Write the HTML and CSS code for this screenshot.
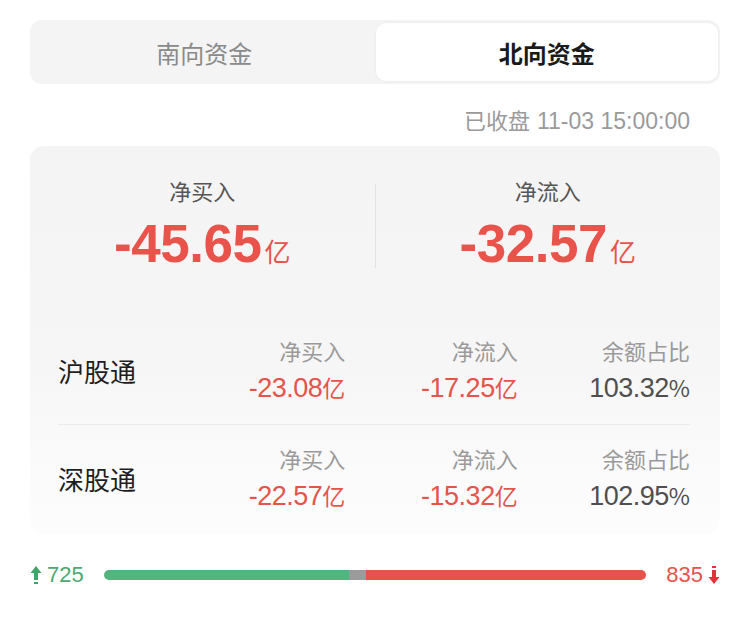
FILE: index.html
```html
<!DOCTYPE html>
<html lang="zh">
<head>
<meta charset="utf-8">
<link rel="stylesheet" href="styles.css">
</head>
<body>
<div class="page">
  <div class="tabs">
    <div class="tab">南向资金</div>
    <div class="tab active">北向资金</div>
  </div>
  <div class="time">已收盘 <span class="tnum">11-03 15:00:00</span></div>
  <div class="card">
    <div class="summary">
      <div class="sum-item">
        <div class="sum-label">净买入</div>
        <div class="sum-value"><span class="num">-45.65</span><span class="unit">亿</span></div>
      </div>
      <div class="sum-divider"></div>
      <div class="sum-item">
        <div class="sum-label">净流入</div>
        <div class="sum-value"><span class="num">-32.57</span><span class="unit">亿</span></div>
      </div>
    </div>
    <div class="rows">
      <div class="row">
        <div class="name">沪股通</div>
        <div class="cell"><div class="lbl">净买入</div><div class="val red"><span class="num">-23.08</span>亿</div></div>
        <div class="cell"><div class="lbl">净流入</div><div class="val red"><span class="num">-17.25</span>亿</div></div>
        <div class="cell"><div class="lbl">余额占比</div><div class="val gray"><span class="num">103.32</span>%</div></div>
      </div>
      <div class="row">
        <div class="name">深股通</div>
        <div class="cell"><div class="lbl">净买入</div><div class="val red"><span class="num">-22.57</span>亿</div></div>
        <div class="cell"><div class="lbl">净流入</div><div class="val red"><span class="num">-15.32</span>亿</div></div>
        <div class="cell"><div class="lbl">余额占比</div><div class="val gray"><span class="num">102.95</span>%</div></div>
      </div>
    </div>
  </div>
  <div class="breadth">
    <div class="count up">
      <svg class="arrow" width="12" height="20" viewBox="0 0 12 20"><path d="M6 1 L11.5 8 H8 V15 H4 V8 H0.5 Z" fill="#3fa56a"/><rect x="4" y="17" width="4" height="2" fill="#3fa56a"/></svg>
      <span class="num">725</span>
    </div>
    <div class="bar">
      <div class="seg green" style="width:45.2%"></div>
      <div class="seg flat" style="width:3.2%"></div>
      <div class="seg red-seg" style="width:51.6%"></div>
    </div>
    <div class="count down">
      <span class="num">835</span>
      <svg class="arrow" width="12" height="20" viewBox="0 0 12 20"><rect x="4" y="1" width="4" height="2" fill="#e0323a"/><path d="M6 19 L11.5 12 H8 V5 H4 V12 H0.5 Z" fill="#e0323a"/></svg>
    </div>
  </div>
</div>
</body>
</html>
```

FILE: styles.css
```css
* { box-sizing: border-box; }
html, body { margin: 0; padding: 0; background: #fff; }
body {
  font-family: "Noto Sans CJK SC", "Noto Sans", sans-serif;
  color: #222;
}
.page { padding: 20px 30px 0 30px; }

.tabs {
  display: flex;
  height: 64px;
  background: #f4f4f4;
  border-radius: 12px;
  padding: 3px 2px 3px 3px;
}
.tab {
  flex: 1;
  display: flex;
  align-items: center;
  justify-content: center;
  font-size: 24px;
  color: #8a8a8a;
  border-radius: 10px;
}
.tab.active {
  background: #fff;
  color: #1a1a1a;
  font-weight: 700;
  box-shadow: 0 0 3px rgba(0,0,0,0.06);
}

.time {
  text-align: right;
  padding-right: 30px;
  margin-top: 20px;
  font-size: 22px;
  color: #9a9a9a;
  line-height: 30px;
  height: 30px;
}
.tnum {
  font-family: "Liberation Sans", sans-serif;
  font-size: 23px;
  margin-left: 2px;
}

.num {
  font-family: "Liberation Sans", "Arimo", sans-serif;
}

.card {
  margin-top: 12px;
  border-radius: 14px;
  background: linear-gradient(#f4f4f4 0%, #f6f6f6 55%, #fdfdfd 100%);
  height: 388px;
}
.summary {
  display: flex;
  padding-top: 28px;
  height: 160px;
  align-items: flex-start;
}
.sum-item {
  flex: 1;
  text-align: center;
}
.sum-label {
  font-size: 22px;
  color: #555;
  line-height: 32px;
}
.sum-value {
  margin-top: 8px;
  color: #e8534b;
  line-height: 60px;
  white-space: nowrap;
}
.sum-value .num {
  font-size: 53px;
  font-weight: 700;
  letter-spacing: -0.5px;
}
.sum-value .unit {
  font-size: 26px;
  margin-left: 3px;
}
.sum-divider {
  width: 1px;
  height: 84px;
  margin-top: 10px;
  background: #e2e2e2;
}

.rows { padding: 10px 30px 0 28px; }
.row {
  display: grid;
  grid-template-columns: 115px 1fr 1fr 1fr;
  align-items: center;
  height: 108px;
}
.row + .row { border-top: 1px solid #ececec; }
.name {
  font-size: 26px;
  color: #1e1e1e;
}
.cell { text-align: right; }
.lbl {
  font-size: 22px;
  color: #9a9a9a;
  line-height: 34px;
}
.val {
  font-size: 23px;
  line-height: 40px;
  white-space: nowrap;
}
.val .num { font-size: 27px; letter-spacing: -0.5px; }
.val.red { color: #e5534b; }
.val.gray { color: #4f4f4f; }

.breadth {
  display: flex;
  align-items: center;
  margin-top: 26px;
  height: 30px;
}
.count {
  display: flex;
  align-items: center;
  font-size: 22px;
}
.count.up { color: #4aa874; width: 74px; }
.count.up .arrow { margin-right: 5px; }
.count.down { color: #e5534b; width: 74px; justify-content: flex-end; }
.count.down .arrow { margin-left: 5px; }
.bar {
  flex: 1;
  display: flex;
  height: 10px;
  border-radius: 5px;
  overflow: hidden;
}
.seg.green { background: #52b57f; }
.seg.flat { background: #9b9b9b; }
.seg.red-seg { background: #e5534b; }
```
